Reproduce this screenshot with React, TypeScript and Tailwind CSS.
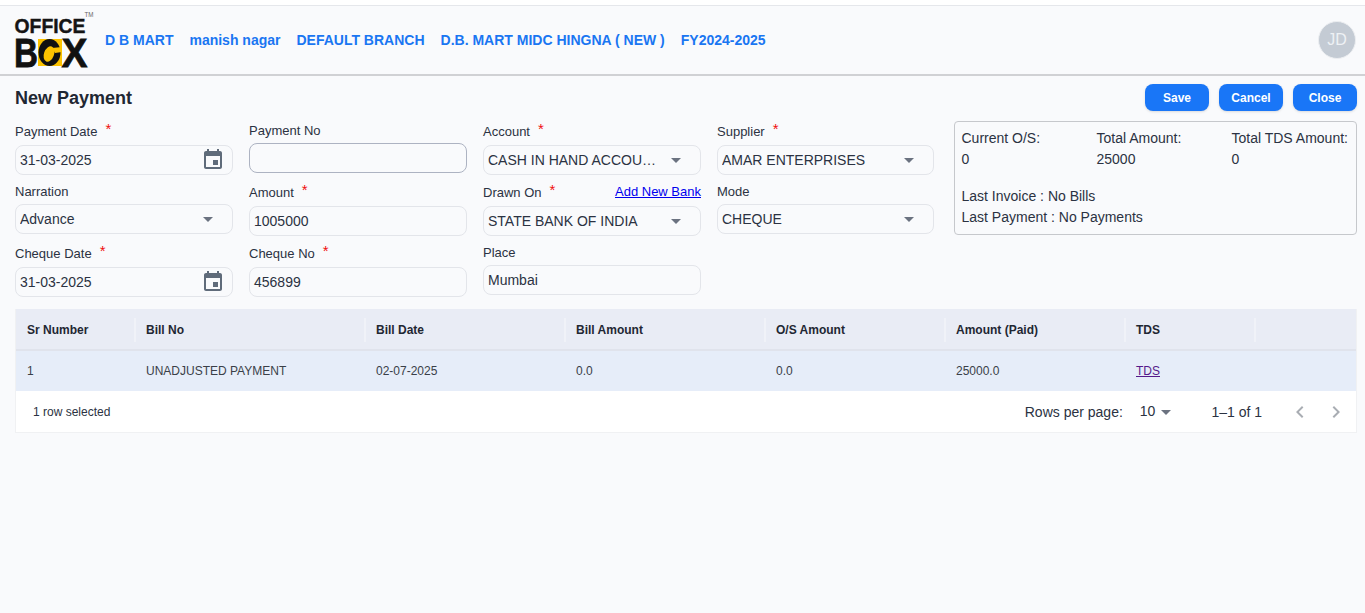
import type { ReactNode } from "react";

const ORG = ["D B MART", "manish nagar", "DEFAULT BRANCH", "D.B. MART MIDC HINGNA ( NEW )", "FY2024-2025"];

const COLS = ["Sr Number", "Bill No", "Bill Date", "Bill Amount", "O/S Amount", "Amount (Paid)", "TDS"];
const CELLS = ["1", "UNADJUSTED PAYMENT", "02-07-2025", "0.0", "0.0", "25000.0"];

function Logo() {
  return (
    <svg width="95" height="68" viewBox="0 0 95 68" className="shrink-0" fontFamily="'Liberation Sans', Arial, sans-serif">
      <text x="9.5" y="26.5" fontSize="21" fontWeight="700" fill="#151515" stroke="#151515" strokeWidth="0.4" textLength="71" lengthAdjust="spacingAndGlyphs">OFFICE</text>
      <text x="79.5" y="11" fontSize="7" fill="#666" textLength="9" lengthAdjust="spacingAndGlyphs">TM</text>
      <text x="9" y="61" fontSize="41" fontWeight="700" fill="#111" stroke="#111" strokeWidth="0.8" textLength="24" lengthAdjust="spacingAndGlyphs">B</text>
      <rect x="33" y="33" width="24" height="27" fill="#fdc300" />
      <ellipse cx="44.5" cy="46.5" rx="11" ry="13.5" fill="#111" />
      <ellipse cx="44" cy="48" rx="5" ry="8" transform="rotate(20 44 48)" fill="#fdc300" />
      <path d="M47 42l10-1v5l-7 1z" fill="#fdc300" />
      <text x="56.5" y="61" fontSize="41" fontWeight="700" fill="#111" stroke="#111" strokeWidth="0.8" textLength="26" lengthAdjust="spacingAndGlyphs">X</text>
    </svg>
  );
}

function CalendarIcon() {
  return (
    <svg width="24" height="24" viewBox="0 0 24 24" fill="#5f6b7a" className="shrink-0">
      <path d="M17 12h-5v5h5v-5zM16 1v2H8V1H6v2H5c-1.11 0-1.99.9-1.99 2L3 19c0 1.1.89 2 2 2h14c1.1 0 2-.9 2-2V5c0-1.1-.9-2-2-2h-1V1h-2zm3 18H5V8h14v11z" />
    </svg>
  );
}

function Caret() {
  return (
    <svg width="24" height="24" viewBox="0 0 24 24" fill="#6b7280" className="shrink-0">
      <path d="M7 10l5 5 5-5z" />
    </svg>
  );
}

function Field({
  label,
  required,
  extra,
  children,
}: {
  label: string;
  required?: boolean;
  extra?: ReactNode;
  children: ReactNode;
}) {
  return (
    <div className="flex flex-col">
      <div className={`flex items-start justify-between text-[13px] leading-[16px] text-[#2b3242] ${required ? "h-[23px] pt-[1px]" : "h-[21px] pt-[1px]"}`}>
        <span>
          {label}
          {required && <span className="relative -top-[2px] ml-[8px] text-[15px] text-[#f01010]">*</span>}
        </span>
        {extra}
      </div>
      {children}
    </div>
  );
}

function Box({ children, strong }: { children?: ReactNode; strong?: boolean }) {
  return (
    <div
      className={`flex h-[30px] items-center rounded-[8px] border pl-[4px] text-[14px] text-[#2b3242] ${
        strong ? "border-[#adb3c2]" : "border-[#e3e5ea]"
      }`}
    >
      {children}
    </div>
  );
}

function DateBox({ value }: { value: string }) {
  return (
    <Box>
      <span className="flex-1">{value}</span>
      <span className="mr-[7px] flex">
        <CalendarIcon />
      </span>
    </Box>
  );
}

function SelectBox({ value }: { value: string }) {
  return (
    <Box>
      <span className="min-w-0 flex-1 truncate">{value}</span>
      <span className="mr-[12px] ml-[5px] flex">
        <Caret />
      </span>
    </Box>
  );
}

export default function App() {
  return (
    <div className="min-h-[613px] bg-[#f9fafc] font-['Liberation_Sans',Arial,sans-serif] text-[#2b3242]">
      <div className="h-[5px] bg-white" />
      {/* header */}
      <header className="flex h-[71px] items-center border-t border-b-2 border-t-[#e5e7eb] border-b-[#d0d1d4] pr-[9px] pl-[5px]">
        <Logo />
        <nav className="ml-[5px] flex gap-4 text-[14px] font-bold text-[#1a76f2]">
          {ORG.map((o) => (
            <span key={o}>{o}</span>
          ))}
        </nav>
        <div className="ml-auto flex h-[38px] w-[38px] items-center justify-center rounded-full border border-[#eceef1] bg-[#c4cbd4] text-[16px] text-[#eef1f4]">
          JD
        </div>
      </header>

      <div className="pr-[8px] pl-[15px]">
        {/* title and actions */}
        <div className="flex h-[46px] items-center justify-between pb-[1px]">
          <h1 className="text-[18px] font-bold text-[#1f2733]">New Payment</h1>
          <div className="-mt-[2px] flex gap-[10px]">
            {["Save", "Cancel", "Close"].map((b) => (
              <button key={b} className="h-[27px] w-[64px] rounded-[8px] bg-[#1976f7] text-[12px] font-bold text-white shadow-sm">
                {b}
              </button>
            ))}
          </div>
        </div>

        {/* form */}
        <div className="flex gap-5">
          <div className="grid w-[919px] shrink-0 grid-cols-[218px_218px_218px_217px] grid-rows-[53px_53px_53px] gap-x-4 gap-y-2">
            <Field label="Payment Date" required>
              <DateBox value="31-03-2025" />
            </Field>
            <Field label="Payment No">
              <Box strong />
            </Field>
            <Field label="Account" required>
              <SelectBox value="CASH IN HAND ACCOUNT" />
            </Field>
            <Field label="Supplier" required>
              <SelectBox value="AMAR ENTERPRISES" />
            </Field>

            <Field label="Narration">
              <SelectBox value="Advance" />
            </Field>
            <Field label="Amount" required>
              <Box>1005000</Box>
            </Field>
            <Field
              label="Drawn On"
              required
              extra={<a className="text-[13px] text-[#0000ee] underline">Add New Bank</a>}
            >
              <SelectBox value="STATE BANK OF INDIA" />
            </Field>
            <Field label="Mode">
              <SelectBox value="CHEQUE" />
            </Field>

            <Field label="Cheque Date" required>
              <DateBox value="31-03-2025" />
            </Field>
            <Field label="Cheque No" required>
              <Box>456899</Box>
            </Field>
            <Field label="Place">
              <Box>Mumbai</Box>
            </Field>
          </div>

          <div className="-mt-[1px] h-[114px] flex-1 rounded-[4px] border border-[#c6c8cc] px-[6.5px] py-[6px] text-[14px] leading-[21px]">
            <div className="grid grid-cols-[135px_135px_1fr]">
              <span>Current O/S:</span>
              <span>Total Amount:</span>
              <span className="whitespace-nowrap">Total TDS Amount:</span>
              <span>0</span>
              <span>25000</span>
              <span>0</span>
            </div>
            <div className="mt-[16px]">Last Invoice : No Bills</div>
            <div>Last Payment : No Payments</div>
          </div>
        </div>

        {/* table */}
        <div className="mt-[12px] border border-t-0 border-[#f0f1f3] bg-white">
          <div className="grid h-[42px] grid-cols-[120px_230px_200px_200px_180px_180px_130px_1fr] items-center border-b-2 border-[#e0e3ec] bg-[#e9ecf5] pt-[1px] text-[12px] font-bold text-[#1f2733]">
            {COLS.map((c, i) => (
              <div key={c} className={`flex h-[24px] items-center border-[#f0f2f8] pr-[10px] ${i === 0 ? "pl-[11px]" : "pl-[10px]"} ${i < 7 ? "border-r-2" : ""}`}>
                {c}
              </div>
            ))}
          </div>
          <div className="grid h-[40px] grid-cols-[120px_230px_200px_200px_180px_180px_130px_1fr] items-center bg-[#e6edf9] text-[12px] text-[#3a3f48]">
            {CELLS.map((c, i) => (
              <div key={i} className={i === 0 ? "pl-[11px]" : "pl-[10px]"}>
                {c}
              </div>
            ))}
            <div className="pl-[10px]">
              <a className="text-[#551a8b] underline">TDS</a>
            </div>
          </div>
          <div className="flex h-[41px] items-center pr-[8px] pl-[17px]">
            <span className="text-[12px] text-[#2b3242]">1 row selected</span>
            <div className="ml-auto flex items-center pt-[1px] text-[14px] text-[#2b3242]">
              <span>Rows per page:</span>
              <span className="ml-[17px] -translate-y-[1px]">10</span>
              <span className="-ml-[1px] flex">
                <Caret />
              </span>
              <span className="ml-[33px]">1–1 of 1</span>
              <svg width="24" height="24" viewBox="0 0 24 24" fill="#a9adb3" className="ml-[26px]">
                <path d="M15.41 7.41 14 6l-6 6 6 6 1.41-1.41L10.83 12z" />
              </svg>
              <svg width="24" height="24" viewBox="0 0 24 24" fill="#a9adb3" className="ml-[12px]">
                <path d="M10 6 8.59 7.41 13.17 12l-4.58 4.59L10 18l6-6z" />
              </svg>
            </div>
          </div>
        </div>
      </div>
    </div>
  );
}
